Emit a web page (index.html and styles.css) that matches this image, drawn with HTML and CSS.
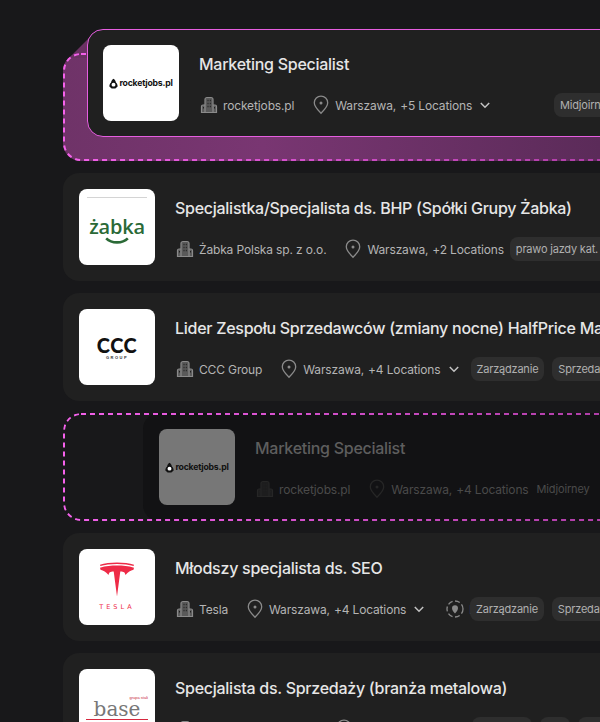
FILE: index.html
```html
<!DOCTYPE html>
<html lang="pl">
<head>
    <meta charset="UTF-8">
    <meta name="viewport" content="width=device-width, initial-scale=1.0">
    <title>Oferty pracy</title>
    <link rel="stylesheet" href="styles.css">
</head>
<body>
    <svg class="icon-defs" width="0" height="0">
        <defs>
            <linearGradient id="dash-fade" gradientUnits="userSpaceOnUse" x1="0" y1="0" x2="537" y2="0">
                <stop offset="0" stop-color="#f562ec"/>
                <stop offset="0.5" stop-color="#d04ec8"/>
                <stop offset="1" stop-color="#b03ea8"/>
            </linearGradient>
        </defs>
        <symbol id="icon-company" viewBox="0 0 20 20">
            <path d="M6 17.500V4.500a2 2 0 0 1 2-2h4a2 2 0 0 1 2 2v13zM2.500 17.500v-6a1.500 1.500 0 0 1 1.500-1.500h2v7.500zM14 17.500V10h2a1.500 1.500 0 0 1 1.500 1.500v6z" fill="currentColor" fill-opacity=".55" stroke="currentColor" stroke-width="1.200"/>
            <path d="M8.500 5.500h1M10.800 5.500h1M8.500 8.500h1M10.800 8.500h1M8.500 11.500h1M10.800 11.500h1M4 12.800h1M15 12.800h1" stroke="#202020" stroke-width="1.400"/>
        </symbol>
        <symbol id="icon-pin" viewBox="0 0 20 20">
            <path d="M10 18.200c-1-1.100-6.700-6-6.700-10.400a6.700 6.700 0 0 1 13.400 0C16.700 12.200 11 17.100 10 18.200z" fill="none" stroke="currentColor" stroke-width="1.300"/>
            <circle cx="10" cy="8" r="1.500" fill="currentColor"/>
        </symbol>
        <symbol id="icon-chevron" viewBox="0 0 12 12">
            <path d="M1.800 4l4.200 4.200L10.200 4" fill="none" stroke="currentColor" stroke-width="1.500"/>
        </symbol>
        <symbol id="icon-rocket" viewBox="0 0 12 14">
            <path d="M6 0.500C8 2 9 3.500 9.200 5.500C10.800 6.500 11.500 8.500 11.500 11L8.500 13.500H3.500L0.500 11C0.500 8.500 1.200 6.500 2.800 5.500C3 3.500 4 2 6 0.500z" fill="currentColor"/>
            <circle cx="6" cy="8.500" r="2.600" fill="#fff"/>
        </symbol>
    </svg>

    <div class="list">
        <!-- Pierwszy slot, karta przeciagana nad nim -->
        <div class="slot slot-active">
            <div class="wedge"></div>
            <svg class="slot-border" width="837" height="108"><rect x="1" y="1" width="835" height="106" rx="17"/></svg>
            <div class="card card-drag">
                <div class="logo"><div class="rocket"><svg class="rocket-icon"><use href="#icon-rocket"/></svg>rocketjobs.pl</div></div>
                <div class="info">
                    <h2 class="title">Marketing Specialist</h2>
                    <div class="meta">
                        <div class="meta-item"><svg class="icon"><use href="#icon-company"/></svg>rocketjobs.pl</div>
                        <div class="meta-item"><svg class="icon"><use href="#icon-pin"/></svg>Warszawa,<span class="more">+5 Locations</span><svg class="chevron"><use href="#icon-chevron"/></svg></div>
                        <div class="tags tags-far"><span class="tag">Midjoirney</span></div>
                    </div>
                </div>
            </div>
        </div>

        <div class="card">
            <div class="logo logo-zabka"><div class="zabka-line"></div><div class="zabka">żabka</div><svg class="zabka-smile" viewBox="0 0 24 6"><path d="M2 1c5 5 15 5 20 0" fill="none" stroke="#2b6a37" stroke-width="2.400"/></svg></div>
            <div class="info">
                <h2 class="title">Specjalistka/Specjalista ds. BHP (Spółki Grupy Żabka)</h2>
                <div class="meta">
                    <div class="meta-item"><svg class="icon"><use href="#icon-company"/></svg>Żabka Polska sp. z o.o.</div>
                    <div class="meta-item"><svg class="icon"><use href="#icon-pin"/></svg>Warszawa,<span class="more">+2 Locations</span></div>
                    <div class="tags tags-near"><span class="tag">prawo jazdy kat. B</span></div>
                </div>
            </div>
        </div>

        <div class="card">
            <div class="logo logo-ccc"><div class="ccc">CCC</div><div class="ccc-group">GROUP</div></div>
            <div class="info">
                <h2 class="title">Lider Zespołu Sprzedawców (zmiany nocne) HalfPrice Marki</h2>
                <div class="meta">
                    <div class="meta-item"><svg class="icon"><use href="#icon-company"/></svg>CCC Group</div>
                    <div class="meta-item"><svg class="icon"><use href="#icon-pin"/></svg>Warszawa,<span class="more">+4 Locations</span><svg class="chevron"><use href="#icon-chevron"/></svg></div>
                    <div class="tags"><span class="tag">Zarządzanie</span><span class="tag">Sprzedaż</span></div>
                </div>
            </div>
        </div>

        <div class="slot slot-empty">
            <svg class="slot-border" width="837" height="108"><rect x="1" y="1" width="835" height="106" rx="17"/></svg>
            <div class="card card-ghost">
                <div class="logo"><div class="rocket"><svg class="rocket-icon"><use href="#icon-rocket"/></svg>rocketjobs.pl</div></div>
                <div class="info">
                    <h2 class="title">Marketing Specialist</h2>
                    <div class="meta">
                        <div class="meta-item"><svg class="icon"><use href="#icon-company"/></svg>rocketjobs.pl</div>
                        <div class="meta-item"><svg class="icon"><use href="#icon-pin"/></svg>Warszawa,<span class="more">+4 Locations</span></div>
                        <div class="ghost-tag">Midjoirney</div>
                    </div>
                </div>
            </div>
        </div>

        <div class="card">
            <div class="logo logo-tesla">
                <svg class="tesla-mark" viewBox="0 0 36 35"><path d="M1 2.800C10 -.4 26 -.4 35 2.800L34.600 4C26 1.300 10 1.300 1.400 4z"/><path d="M18 34.500L14.700 9.500C11 9.500 10 10.500 9.500 13C7 10 4.500 8.500 1.500 7.800L1 5.800C7 4 12 3.600 18 3.600C24 3.600 29 4 35 5.800L34.500 7.800C31.500 8.500 29 10 26.500 13C26 10.500 25 9.500 21.300 9.500z"/></svg>
                <div class="tesla">TESLA</div>
            </div>
            <div class="info">
                <h2 class="title">Młodszy specjalista ds. SEO</h2>
                <div class="meta">
                    <div class="meta-item"><svg class="icon"><use href="#icon-company"/></svg>Tesla</div>
                    <div class="meta-item"><svg class="icon"><use href="#icon-pin"/></svg>Warszawa,<span class="more">+4 Locations</span><svg class="chevron"><use href="#icon-chevron"/></svg></div>
                    <div class="meta-item meta-remote"><svg class="icon" viewBox="0 0 20 20"><circle cx="10" cy="10" r="8" fill="none" stroke="currentColor" stroke-width="1.300" stroke-dasharray="5 2.500"/><path d="M10 14.500c-.5-.6-3-3-3-5.300a3 3 0 0 1 6 0c0 2.300-2.500 4.700-3 5.300z" fill="currentColor"/></svg>Inne</div>
                </div>
                <div class="tags tags-over"><span class="tag">Zarządzanie</span><span class="tag">Sprzedaż</span></div>
            </div>
        </div>

        <div class="card">
            <div class="logo logo-base"><div class="base-top">grupa stali</div><div class="base">base</div><div class="base-line"></div></div>
            <div class="info">
                <h2 class="title">Specjalista ds. Sprzedaży (branża metalowa)</h2>
                <div class="meta">
                    <div class="meta-item"><svg class="icon"><use href="#icon-company"/></svg>Base Group sp. z o.o.</div>
                    <div class="meta-item"><svg class="icon"><use href="#icon-pin"/></svg>Warszawa,<span class="more">+1 Location</span></div>
                </div>
                <div class="tags tags-over tags-last"><span class="tag">Sprzedaż</span><span class="tag">Stal</span><span class="tag">B2B</span></div>
            </div>
        </div>
    </div>
</body>
</html>
```

FILE: styles.css
```css
* {
    box-sizing: border-box;
}
html, body {
    height: 100%;
}
body {
    margin: 0;
    background-color: #18181a;
    font-family: Inter, "Liberation Sans", sans-serif;
    overflow: hidden;
}
.icon-defs {
    display: block;
    height: 0;
}
.list {
    display: flex;
    flex-direction: column;
    gap: 12px;
    padding: 53px 0 0 63px;
    width: 900px;
}
.card {
    display: flex;
    gap: 20px;
    flex: none;
    width: 837px;
    height: 108px;
    padding: 16px;
    background-color: #202020;
    border-radius: 16px;
}
.logo {
    display: flex;
    flex: none;
    flex-direction: column;
    align-items: center;
    justify-content: center;
    width: 76px;
    height: 76px;
    background-color: #fff;
    border-radius: 8px;
    overflow: hidden;
}
.info {
    position: relative;
    min-width: 0;
    padding-top: 7px;
}
.title {
    margin: 0 0 17px;
    color: #e6e6e6;
    font-size: 16px;
    font-weight: 500;
    line-height: 24px;
    letter-spacing: -.27px;
    white-space: nowrap;
}
.meta {
    display: flex;
    align-items: center;
    gap: 17px;
    height: 24px;
    color: #b4b4b4;
    font-size: 12px;
    letter-spacing: -.15px;
    white-space: nowrap;
}
.meta-item {
    display: flex;
    align-items: center;
    gap: 4px;
}
.icon {
    width: 20px;
    height: 20px;
    color: #8a8a8a;
}
.chevron {
    width: 12px;
    height: 12px;
    margin-left: 3px;
    color: #c4c4c4;
}
.meta-remote {
    margin-left: 3px;
}
.tags {
    display: flex;
    gap: 8px;
    margin-left: -6px;
}
.tags-near {
    margin-left: -11px;
}
.tags-far {
    margin-left: 46px;
}
.tags-over {
    position: absolute;
    top: 48px;
    left: 295px;
    margin: 0;
    white-space: nowrap;
}
.tags-last {
    left: 297px;
}
.tag {
    height: 24px;
    padding: 0 6px;
    background-color: #2e2e2e;
    border-radius: 8px;
    color: #b0b0b0;
    font-size: 11px;
    line-height: 24px;
    letter-spacing: -.2px;
}

/* sloty */
.slot {
    position: relative;
    flex: none;
    width: 837px;
    height: 108px;
    border-radius: 18px;
}
.slot-border {
    position: absolute;
    top: 0;
    left: 0;
}
.slot-border rect {
    fill: none;
    stroke: url(#dash-fade);
    stroke-width: 2;
    stroke-dasharray: 5 4;
}
.slot-active {
    background: linear-gradient(90deg, #6f3368 0, #793672 200px, #5b2b59 537px);
}
.wedge {
    position: absolute;
    top: -17px;
    left: 6px;
    width: 22px;
    height: 22px;
    background-color: #6a3163;
    clip-path: polygon(100% 0, 100% 100%, 0 100%);
}
.card-drag {
    position: absolute;
    top: -24px;
    left: 24px;
    border: 1px solid #e65ee0;
    padding: 15px;
}
.slot-empty {
    overflow: hidden;
}
.slot-empty .slot-border {
    z-index: 1;
}
.card-ghost {
    position: absolute;
    top: 0;
    left: 80px;
    background-color: #121214;
}
.card-ghost .logo {
    background-color: #777;
}
.card-ghost .title {
    color: #5e5e5e;
}
.card-ghost .meta {
    color: #4a4a4a;
}
.card-ghost .icon {
    color: #262626;
}
.ghost-tag {
    margin-left: -9px;
    font-size: 11px;
}

/* logotypy */
.rocket {
    display: flex;
    align-items: center;
    gap: 1px;
    color: #111;
    font-family: Inter, sans-serif;
    font-size: 8.700px;
    font-weight: 700;
    letter-spacing: -.2px;
}
.rocket-icon {
    width: 9px;
    height: 11px;
}
.logo-zabka {
    position: relative;
}
.zabka-line {
    position: absolute;
    top: 8px;
    left: 8px;
    width: 60px;
    height: 1px;
    background-color: #d4d4d4;
}
.zabka {
    margin-top: 7px;
    color: #2b6a37;
    font-family: "Open Sans", sans-serif;
    font-size: 20px;
    font-weight: 600;
    line-height: 20px;
    letter-spacing: -.2px;
}
.zabka-smile {
    width: 26px;
    height: 7px;
}
.ccc {
    color: #111;
    font-family: Lato, sans-serif;
    font-size: 20px;
    font-weight: 900;
    line-height: 20px;
    letter-spacing: .5px;
}
.ccc-group {
    color: #333;
    font-family: "Liberation Sans", sans-serif;
    font-size: 4px;
    font-weight: 700;
    line-height: 5px;
    letter-spacing: 1.500px;
}
.tesla-mark {
    width: 36px;
    height: 35px;
    margin-top: -1px;
    fill: #ee2b47;
}
.tesla {
    margin-top: 6px;
    color: #ee2b47;
    font-family: "DejaVu Sans", sans-serif;
    font-size: 6.500px;
    line-height: 8px;
    letter-spacing: 3px;
}
.logo-base {
    align-items: flex-end;
    padding: 26px 7px 0;
    justify-content: flex-start;
}
.base-top {
    color: #c8283c;
    font-family: "Liberation Sans", sans-serif;
    font-size: 4px;
    line-height: 5px;
}
.base {
    align-self: center;
    color: #777;
    font-family: "DejaVu Serif", serif;
    font-size: 20px;
    line-height: 19px;
}
.base-line {
    width: 100%;
    height: 1px;
    background-color: #d6283e;
}
```
